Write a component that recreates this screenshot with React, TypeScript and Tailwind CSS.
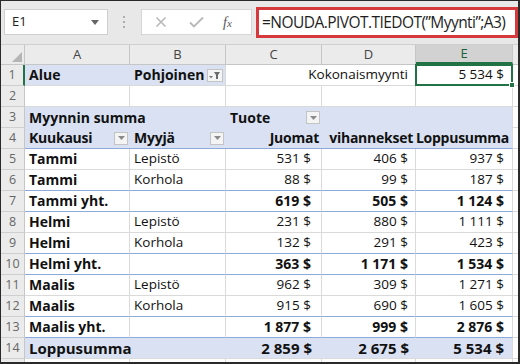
import React from "react";

const FONT = { fontFamily: '"Open Sans", "Noto Sans", sans-serif' };

type Cell = {
  t?: string;
  b?: boolean;
  r?: boolean;
  dd?: boolean;
  filter?: boolean;
};

type Row = {
  n: number;
  band?: "full" | "ab" | null;
  blueBottom?: boolean;
  big?: boolean;
  cells: Cell[];
};

const rows: Row[] = [
  {
    n: 1,
    band: "ab",
    cells: [
      { t: "Alue", b: true },
      { t: "Pohjoinen", b: true, filter: true },
      {},
      { t: "Kokonaismyynti", r: true },
      { t: "5 534 $", r: true },
    ],
  },
  { n: 2, cells: [{}, {}, {}, {}, {}] },
  {
    n: 3,
    band: "full",
    cells: [{ t: "Myynnin summa", b: true }, {}, { t: "Tuote", b: true, dd: true }, {}, {}],
  },
  {
    n: 4,
    band: "full",
    cells: [
      { t: "Kuukausi", b: true, dd: true },
      { t: "Myyjä", b: true, dd: true },
      { t: "Juomat", b: true, r: true },
      { t: "vihannekset", b: true, r: true },
      { t: "Loppusumma", b: true, r: true },
    ],
  },
  {
    n: 5,
    cells: [
      { t: "Tammi", b: true },
      { t: "Lepistö" },
      { t: "531 $", r: true },
      { t: "406 $", r: true },
      { t: "937 $", r: true },
    ],
  },
  {
    n: 6,
    blueBottom: true,
    cells: [
      { t: "Tammi", b: true },
      { t: "Korhola" },
      { t: "88 $", r: true },
      { t: "99 $", r: true },
      { t: "187 $", r: true },
    ],
  },
  {
    n: 7,
    blueBottom: true,
    cells: [
      { t: "Tammi yht.", b: true },
      {},
      { t: "619 $", r: true, b: true },
      { t: "505 $", r: true, b: true },
      { t: "1 124 $", r: true, b: true },
    ],
  },
  {
    n: 8,
    cells: [
      { t: "Helmi", b: true },
      { t: "Lepistö" },
      { t: "231 $", r: true },
      { t: "880 $", r: true },
      { t: "1 111 $", r: true },
    ],
  },
  {
    n: 9,
    blueBottom: true,
    cells: [
      { t: "Helmi", b: true },
      { t: "Korhola" },
      { t: "132 $", r: true },
      { t: "291 $", r: true },
      { t: "423 $", r: true },
    ],
  },
  {
    n: 10,
    blueBottom: true,
    cells: [
      { t: "Helmi yht.", b: true },
      {},
      { t: "363 $", r: true, b: true },
      { t: "1 171 $", r: true, b: true },
      { t: "1 534 $", r: true, b: true },
    ],
  },
  {
    n: 11,
    cells: [
      { t: "Maalis", b: true },
      { t: "Lepistö" },
      { t: "962 $", r: true },
      { t: "309 $", r: true },
      { t: "1 271 $", r: true },
    ],
  },
  {
    n: 12,
    blueBottom: true,
    cells: [
      { t: "Maalis", b: true },
      { t: "Korhola" },
      { t: "915 $", r: true },
      { t: "690 $", r: true },
      { t: "1 605 $", r: true },
    ],
  },
  {
    n: 13,
    blueBottom: true,
    cells: [
      { t: "Maalis yht.", b: true },
      {},
      { t: "1 877 $", r: true, b: true },
      { t: "999 $", r: true, b: true },
      { t: "2 876 $", r: true, b: true },
    ],
  },
  {
    n: 14,
    band: "full",
    big: true,
    cells: [
      { t: "Loppusumma", b: true },
      {},
      { t: "2 859 $", r: true, b: true },
      { t: "2 675 $", r: true, b: true },
      { t: "5 534 $", r: true, b: true },
    ],
  },
];

const widths = ["w-[105px]", "w-[96px]", "w-[96px]", "w-[94px]", "w-[97px]"];
const numPad = ["pr-[3px]", "pr-[3px]", "pr-[10px]", "pr-[7px]", "pr-[8px]"];
const headPad = "pr-[3px]";

function DropBtn() {
  return (
    <div className="w-[14px] h-[13px] border border-[#c4c4c4] bg-[#f4f4f4] flex items-center justify-center shrink-0">
      <svg width="7" height="4" viewBox="0 0 7 4">
        <path d="M0 0 L7 0 L3.5 4 Z" fill="#8a8a8a" />
      </svg>
    </div>
  );
}

function FilterBtn() {
  return (
    <div className="w-[16px] h-[13px] border border-[#c4c4c4] bg-[#f4f4f4] flex items-center justify-center shrink-0">
      <svg width="12" height="9" viewBox="0 0 12 9">
        <path d="M0 5 L4 5 L2 7.5 Z" fill="#7a7a7a" />
        <path d="M5 1 L11 1 L9 4 L9 8 L7 8 L7 4 Z" fill="#6a6a6a" />
      </svg>
    </div>
  );
}

function GridRow({ row }: { row: Row }) {
  const bandBg = "bg-[#d9e1f2]";
  const isFull = row.band === "full";
  const rowBottom = row.blueBottom ? "border-b border-b-[#8eaadb]" : "border-b border-b-[#dadada]";
  return (
    <div className="flex h-[21px]">
      <div
        className={`w-[24px] shrink-0 flex items-center justify-center text-[12.5px] text-[#666] bg-[#ebebeb] border-b border-b-[#cfcfcf] ${
          row.n === 1 ? "border-r-2 border-r-[#217346]" : "border-r border-r-[#c6c6c6]"
        }`}
      >
        {row.n}
      </div>
      {row.cells.map((c, i) => {
        const inBand = isFull || (row.band === "ab" && i < 2);
        const bg = inBand ? bandBg : "bg-white";
        let rightBorder = "border-r border-r-[#dadada]";
        if (isFull && i < 4) rightBorder = "";
        if (row.band === "ab" && i === 0) rightBorder = "";
        if (row.n === 1 && i === 2) rightBorder = "";
        if (row.n === 3 && i === 0) rightBorder = "";
        const bottom = isFull
          ? row.n === 3
            ? ""
            : row.n === 4
            ? "border-b border-b-[#8eaadb]"
            : "border-b border-b-[#dadada]"
          : row.band === "ab" && i < 2
          ? "border-b border-b-[#dadada]"
          : rowBottom;
        const size = row.big
          ? "text-[15px]"
          : c.b
          ? "text-[14px]"
          : "text-[13.5px]";
        const weight = c.b ? "font-bold" : "font-normal";
        const track = row.n === 4 ? "tracking-[-0.25px]" : "";
        const pad = c.r ? (row.n === 4 ? headPad : numPad[i]) : "pl-[4px] pr-[2px]";
        return (
          <div
            key={i}
            className={`${widths[i]} shrink-0 relative flex items-center ${
              c.r ? "justify-end" : "justify-between"
            } ${bg} ${rightBorder} ${bottom} ${pad} ${size} ${weight} ${track} text-[#111] whitespace-nowrap leading-none`}
            style={{ overflow: "visible" }}
          >
            {c.t !== undefined && <span className="relative z-10">{c.t}</span>}
            {c.dd && <DropBtn />}
            {c.filter && <FilterBtn />}
            {row.n === 1 && i === 4 && (
              <div className="absolute -left-px -top-px w-[98px] h-[22px] border-2 border-[#217346] pointer-events-none z-20">
                <div className="absolute -right-[4px] -bottom-[4px] w-[6px] h-[6px] bg-[#217346] border border-white" />
              </div>
            )}
          </div>
        );
      })}
      <div className="flex-1 bg-white border-b border-b-[#dadada]" />
    </div>
  );
}

export default function App() {
  return (
    <div
      className="w-[520px] h-[364px] overflow-hidden border-t border-l border-r-2 border-b-2 border-[#2a2a2a] bg-white flex flex-col"
      style={FONT}
    >
      {/* Formula bar */}
      <div className="h-[43px] shrink-0 bg-[#e8e8e8] flex items-start">
        <div className="shrink-0 mt-[8px] ml-[3px] w-[104px] h-[26px] bg-white border border-[#cfcfcf] flex items-center justify-between pl-[7px] pr-[8px]">
          <span className="text-[13px] text-[#222]">E1</span>
          <svg width="8" height="5" viewBox="0 0 8 5">
            <path d="M0 0 L8 0 L4 5 Z" fill="#666" />
          </svg>
        </div>
        <div className="shrink-0 mt-[15px] ml-[15px] flex flex-col gap-[3px] items-center">
          <div className="w-[2px] h-[2px] bg-[#9a9a9a] rounded-full" />
          <div className="w-[2px] h-[2px] bg-[#9a9a9a] rounded-full" />
          <div className="w-[2px] h-[2px] bg-[#9a9a9a] rounded-full" />
        </div>
        <div className="shrink-0 mt-[8px] ml-[16px] w-[111px] h-[26px] bg-white border border-[#d6d6d6] flex items-center pl-[13px]">
          <svg width="12" height="12" viewBox="0 0 12 12">
            <path d="M1.5 1.5 L10.5 10.5 M10.5 1.5 L1.5 10.5" stroke="#b8b8b8" strokeWidth="1.6" />
          </svg>
          <svg width="15" height="12" viewBox="0 0 15 12" className="ml-[22px]">
            <path d="M1 6.5 L5 10.5 L14 1.5" stroke="#b8b8b8" strokeWidth="1.8" fill="none" />
          </svg>
          <span
            className="ml-[19px] text-[14px] italic text-[#555]"
            style={{ fontFamily: '"Liberation Serif", serif' }}
          >
            f<span className="text-[11px]">x</span>
          </span>
        </div>
        <div className="min-w-0 mt-[6px] ml-[4px] flex-1 h-[31px] bg-white border-[3px] border-[#d6393b] flex items-center pl-[3px] overflow-hidden">
          <span className="text-[15.5px] text-[#1e1e1e] whitespace-nowrap tracking-[-0.55px]">
            =NOUDA.PIVOT.TIEDOT(”Myynti”;A3)
          </span>
        </div>
      </div>
      {/* Column headers */}
      <div className="flex h-[21px] shrink-0 bg-[#ebebeb] border-t border-t-[#d0d0d0] border-b border-b-[#c6c6c6]">
        <div className="w-[24px] shrink-0 border-r border-r-[#c6c6c6] flex items-end justify-end pr-[2px] pb-[2px]">
          <svg width="10" height="10" viewBox="0 0 10 10">
            <path d="M10 0 L10 10 L0 10 Z" fill="#b5b5b5" />
          </svg>
        </div>
        {["A", "B", "C", "D", "E"].map((l, i) => (
          <div
            key={l}
            className={`${widths[i]} shrink-0 flex items-center justify-center text-[13px] ${
              l === "E"
                ? "bg-[#d2d2d2] text-[#1f5f3a] border-b-2 border-b-[#217346]"
                : "text-[#444]"
            } border-r border-r-[#c6c6c6]`}
          >
            {l}
          </div>
        ))}
        <div className="flex-1" />
      </div>
      {/* Grid */}
      <div className="flex flex-col">
        {rows.map((r) => (
          <GridRow key={r.n} row={r} />
        ))}
        <div className="flex h-[4px]">
          <div className="w-[24px] bg-[#ebebeb] border-r border-r-[#c6c6c6]" />
          {widths.map((w, i) => (
            <div key={i} className={`${w} border-r border-r-[#dadada] bg-white`} />
          ))}
        </div>
      </div>
    </div>
  );
}
